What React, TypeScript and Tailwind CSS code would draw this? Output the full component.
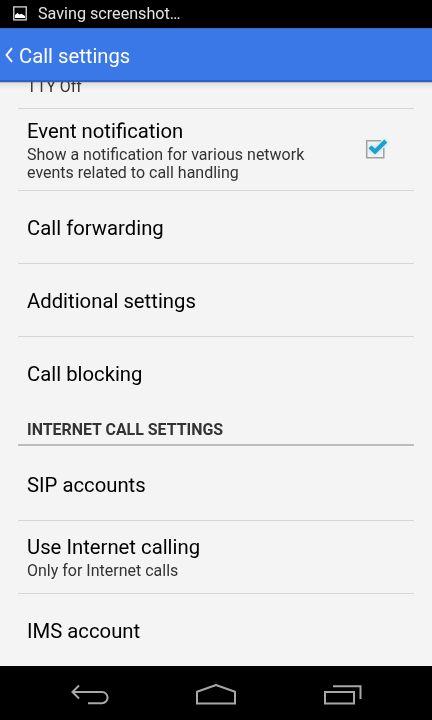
import React from "react";

function Title({ children }: { children: React.ReactNode }) {
  return <div className="origin-left scale-x-[0.966] text-[21px] leading-6 text-black">{children}</div>;
}

function Summary({ children }: { children: React.ReactNode }) {
  return <div className="mt-[3px] origin-left scale-x-[0.976] text-[16.4px] leading-[18.5px] text-[#333]">{children}</div>;
}

function Row({ title, h, sub, last }: { title: string; h: string; sub?: string; last?: boolean }) {
  return (
    <div className={`mx-[18px] flex shrink-0 flex-col justify-center px-[9px] ${h} ${last ? "" : "border-b border-[#d6d6d6]"}`}>
      <Title>{title}</Title>
      {sub && <Summary>{sub}</Summary>}
    </div>
  );
}

function NavBar() {
  return (
    <div className="flex h-[54px] shrink-0 items-center justify-between bg-black pl-[70px] pr-[70px] pt-[3px]">
      <svg width="39" height="22" viewBox="0 0 39 22" fill="none" stroke="#a8a8a8" strokeWidth="2">
        <path d="M9 1.5L2.5 8 9 14.5M2.5 8H32a5.6 5.6 0 0 1 0 11.2H18" />
      </svg>
      <svg width="42" height="22" viewBox="0 0 42 22" fill="none" stroke="#a8a8a8" strokeWidth="2">
        <path d="M2 19.5V7.7L21 1l19 6.7v11.8z" />
      </svg>
      <svg width="39" height="20" viewBox="0 0 39 20" fill="none" stroke="#a8a8a8" strokeWidth="2">
        <path d="M2 7h29v11.5H2zM10 1.3h27.5V14" />
      </svg>
    </div>
  );
}

export default function App() {
  return (
    <div className="flex h-[720px] w-[432px] flex-col overflow-hidden whitespace-nowrap bg-[#f4f4f4] font-[Roboto,sans-serif]">
      <div className="flex h-7 shrink-0 items-center bg-black pl-[13px] text-[16.4px] text-[#e4e4e4]">
        <svg className="-mt-px" width="14" height="15" viewBox="0 0 14 15">
          <rect x=".75" y=".9" width="12.5" height="13" fill="none" stroke="#ccc" strokeWidth="1.4" />
          <path d="M2 12V9l2.5-2 2 1.5 2-.8L12 10v2z" fill="#fff" />
        </svg>
        <span className="ml-[11px] origin-left scale-x-[0.985]">Saving screenshot…</span>
      </div>
      <div className="flex h-[54px] shrink-0 items-center border-b-2 border-t border-b-[#315fbd] border-t-[#3569cc] bg-[#3b78e7] pl-[5px] pt-[5px] text-[21px] text-white">
        <svg className="-mt-[4px]" width="9" height="16" viewBox="0 0 9 16" fill="none" stroke="white" strokeWidth="1.9"><path d="M7 1.2L1.5 8 7 14.8" /></svg>
        <span className="ml-[5px] origin-left scale-x-[0.963]">Call settings</span>
      </div>
      <div className="flex h-[584px] shrink-0 flex-col overflow-hidden bg-[linear-gradient(to_bottom,#b9bdc4_0px,#b9bdc4_1px,#e2e2e2_1px,#f4f4f4_8px)]">
        <div className="mx-[18px] h-[27px] shrink-0 border-b border-[#d6d6d6] px-[9px]"><div className="-mt-[5px] origin-left scale-x-[0.973] text-[16.4px] leading-[19px] text-[#333]">TTY Off</div></div>
        <div className="mx-[18px] flex h-[82px] shrink-0 items-center border-b border-[#d6d6d6] px-[9px]">
          <div className="grow pt-[2px]">
            <Title>Event notification</Title>
            <Summary>Show a notification for various network<br />events related to call handling</Summary>
          </div>
          <svg className="-mt-[2px] mr-[15px]" width="26" height="24" viewBox="0 0 26 24">
            <path d="M17 3.7H2.7v17.1h17.1V11" fill="none" stroke="#a0a0a0" strokeWidth="1.5" />
            <path d="M4.5 11.2L7.5 8.4l3.5 3.3 9.3-9.2 3 3L11 17.4z" fill="#219fcc" className="drop-shadow-[0_0_2px_#8edcf7]" />
          </svg>
        </div>
        <Row title="Call forwarding" h="h-[73px] pt-[2px]" />
        <Row title="Additional settings" h="h-[73px] pt-[2px]" />
        <Row title="Call blocking" h="h-[74px]" last />
        <div className="mx-[18px] flex h-[35px] shrink-0 items-center border-b-2 border-[#bcbcbc] px-[9px] pt-[5px] text-[16.4px] font-bold text-[#333]"><span className="origin-left scale-x-[0.972]">INTERNET CALL SETTINGS</span></div>
        <Row title="SIP accounts" h="h-[75px] pt-[4px]" />
        <Row title="Use Internet calling" sub="Only for Internet calls" h="h-[73px] pt-[2px]" />
        <Row title="IMS account" h="h-[72px] pt-[2px]" last />
      </div>
      <NavBar />
    </div>
  );
}
